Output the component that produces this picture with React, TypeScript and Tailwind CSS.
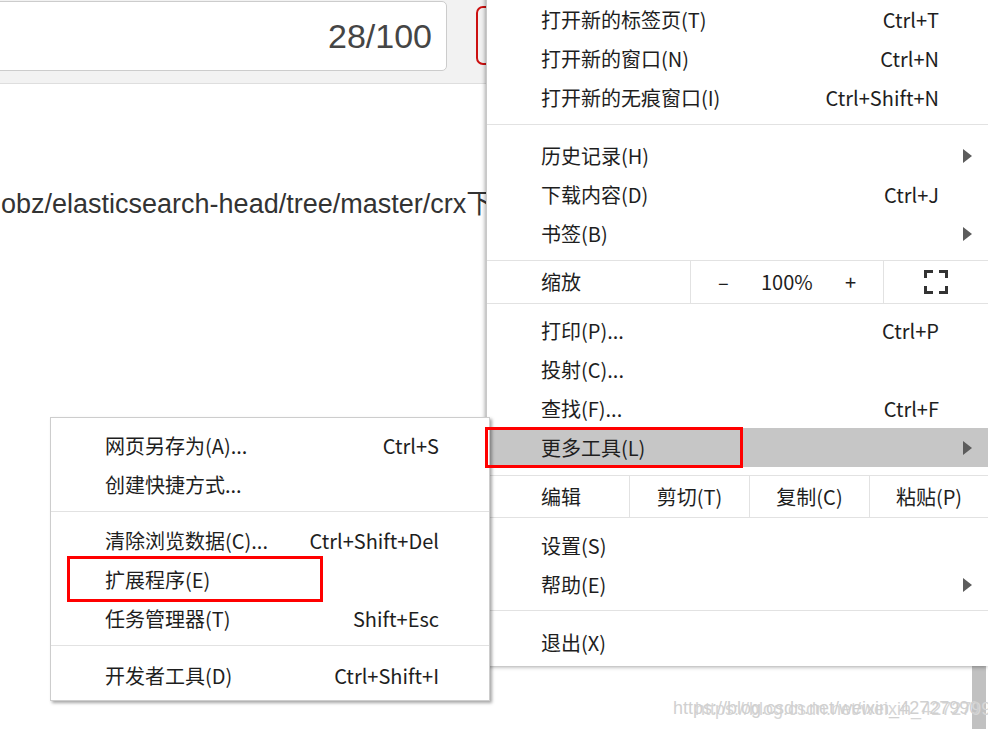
import React from "react";

const Tri = () => (
  <svg width="9" height="14" viewBox="0 0 9 14">
    <polygon points="0,0 9,7 0,14" fill="#5c5c5c" />
  </svg>
);

const FullIcon = () => (
  <svg width="24" height="24" viewBox="0 0 24 24" fill="none" stroke="#333" strokeWidth="3">
    <path d="M1.5 8 V1.5 H9" />
    <path d="M15 1.5 H22.5 V8" />
    <path d="M22.5 16 V22.5 H15" />
    <path d="M9 22.5 H1.5 V16" />
  </svg>
);

type ItemProps = { label: string; shortcut?: string; arrow?: boolean; highlight?: boolean };

const Item = ({ label, shortcut, arrow, highlight }: ItemProps) => (
  <div className={highlight ? "flex items-center h-[39px] pl-[54px] bg-[#c6c6c6]" : "flex items-center h-[39px] pl-[54px]"}>
    <span className="flex-1 whitespace-nowrap">{label}</span>
    <span className="whitespace-nowrap">{shortcut}</span>
    <span className="w-[49px] pl-[24px] flex items-center">{arrow && <Tri />}</span>
  </div>
);

const SubItem = ({ label, shortcut }: { label: string; shortcut?: string }) => (
  <div className="flex items-center h-[39px] pl-[54px] pr-[50px]">
    <span className="flex-1 whitespace-nowrap">{label}</span>
    <span className="whitespace-nowrap">{shortcut}</span>
  </div>
);

const Sep = () => <div className="h-px bg-[#e2e2e2]" />;
const VSep = () => <div className="w-px bg-[#e2e2e2]" />;

export default function App() {
  return (
    <div className="relative w-[988px] h-[729px] overflow-hidden bg-white">
      {/* page behind */}
      <div className="h-[84px] bg-[#f2f2f2] border-b border-[#dedede] flex items-start">
        <div className="-ml-[12px] mt-[1px] w-[459px] h-[70px] bg-white border border-[#cccccc] rounded-[5px] flex items-center justify-end pr-[14px] text-[34px] text-[#454545] font-['Liberation_Sans',Arial,sans-serif]">
          28/100
        </div>
        <div className="ml-[29px] mt-[6px] w-[60px] h-[59px] border-2 border-[#cc1111] rounded-[7px]" />
      </div>
      <div className="pt-[103px] pl-[1px] text-[27px] leading-[34px] text-[#333333] whitespace-nowrap font-['Liberation_Sans',Arial,'Noto_Sans_CJK_SC',sans-serif]">
        obz/elasticsearch-head/tree/master/crx下载
      </div>

      {/* scrollbar */}
      <div className="absolute left-[972px] top-[660px] w-[14px] h-[69px] bg-[#c1c1c1]" />

      {/* watermark (doubled print) */}
      <div className="absolute left-[673px] top-[698px] text-[18px] leading-[20px] text-[#d0d0d0] whitespace-nowrap font-['Liberation_Sans',Arial,sans-serif] [text-shadow:22px_1px_0_#d6d6d6]">
        https://blog.csdn.net/weixin_42727990
      </div>

      {/* main menu */}
      <div className="absolute left-[486px] top-[-12px] w-[502px] bg-white border-l border-[#c8c8c8] shadow-[-1px_1px_4px_rgba(0,0,0,0.35)] text-[20px] text-[#1e1e1e] font-['Noto_Sans_CJK_SC','Noto_Sans',sans-serif]">
        <div className="pt-[12px] pb-[7px]">
          <Item label="打开新的标签页(T)" shortcut="Ctrl+T" />
          <Item label="打开新的窗口(N)" shortcut="Ctrl+N" />
          <Item label="打开新的无痕窗口(I)" shortcut="Ctrl+Shift+N" />
        </div>
        <Sep />
        <div className="pt-[11px] pb-[7px]">
          <Item label="历史记录(H)" arrow />
          <Item label="下载内容(D)" shortcut="Ctrl+J" />
          <Item label="书签(B)" arrow />
        </div>
        <Sep />
        <div className="flex h-[42px]">
          <div className="w-[203px] pl-[54px] flex items-center">缩放</div>
          <VSep />
          <div className="w-[192px] px-[27px] flex items-center justify-between">
            <span>–</span>
            <span>100%</span>
            <span>+</span>
          </div>
          <VSep />
          <div className="flex-1 flex items-center justify-center">
            <FullIcon />
          </div>
        </div>
        <Sep />
        <div className="pt-[7px] pb-[8px]">
          <Item label="打印(P)..." shortcut="Ctrl+P" />
          <Item label="投射(C)..." />
          <Item label="查找(F)..." shortcut="Ctrl+F" />
          <Item label="更多工具(L)" arrow highlight />
        </div>
        <Sep />
        <div className="flex h-[41px]">
          <div className="w-[142px] pl-[54px] flex items-center">编辑</div>
          <VSep />
          <div className="w-[119px] flex items-center justify-center">剪切(T)</div>
          <VSep />
          <div className="w-[119px] flex items-center justify-center">复制(C)</div>
          <VSep />
          <div className="flex-1 flex items-center justify-center">粘贴(P)</div>
        </div>
        <Sep />
        <div className="pt-[8px] pb-[6px]">
          <Item label="设置(S)" />
          <Item label="帮助(E)" arrow />
        </div>
        <Sep />
        <div className="pt-[12px] pb-[4px]">
          <Item label="退出(X)" />
        </div>
      </div>

      {/* submenu */}
      <div className="absolute left-[50px] top-[417px] w-[440px] bg-white border border-[#cdcdcd] shadow-[2px_2px_3px_rgba(0,0,0,0.35)] text-[20px] text-[#1e1e1e] font-['Noto_Sans_CJK_SC','Noto_Sans',sans-serif]">
        <div className="pt-[8px] pb-[7px]">
          <SubItem label="网页另存为(A)..." shortcut="Ctrl+S" />
          <SubItem label="创建快捷方式..." />
        </div>
        <Sep />
        <div className="pt-[9px] pb-[7px]">
          <SubItem label="清除浏览数据(C)..." shortcut="Ctrl+Shift+Del" />
          <SubItem label="扩展程序(E)" />
          <SubItem label="任务管理器(T)" shortcut="Shift+Esc" />
        </div>
        <Sep />
        <div className="pt-[10px] pb-[5px]">
          <SubItem label="开发者工具(D)" shortcut="Ctrl+Shift+I" />
        </div>
      </div>

      {/* red annotation boxes */}
      <div className="absolute left-[485px] top-[427px] w-[258px] h-[41px] border-[3px] border-[#ff0000]" />
      <div className="absolute left-[67px] top-[556px] w-[256px] h-[46px] border-[3px] border-[#ff0000]" />
    </div>
  );
}
